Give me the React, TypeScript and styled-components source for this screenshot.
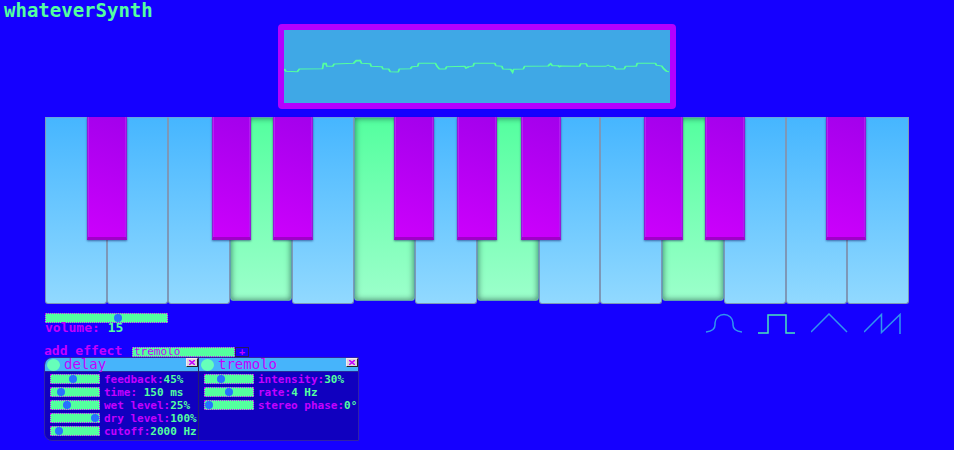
import React from "react";
import styled, { createGlobalStyle, css } from "styled-components";

const GREEN = "#54ff9f";
const PINK = "#c400ff";
const SKY = "#46b4fb";
const BLUE = "#1500ff";
const NAVY = "#1000bf";

const GlobalStyle = createGlobalStyle`
  * { box-sizing: border-box; }
  body {
    margin: 0;
    background: ${BLUE};
    color: ${PINK};
    font-family: "DejaVu Sans Mono", "Liberation Mono", monospace;
    font-weight: 700;
    font-size: 11px;
  }
  button, input, select { font: inherit; margin: 0; padding: 0; }
`;

const Page = styled.main`
  display: flex;
  flex-direction: column;
`;

const Title = styled.h1`
  margin: 0;
  padding: 0 4px;
  font-size: 19px;
  line-height: 20px;
  color: ${GREEN};
`;

const Scope = styled.section`
  align-self: center;
  width: 42%;
  min-width: 240px;
  max-width: 398px;
  margin: 4px 0 8px;
  border: 6px solid #b400ff;
  border-radius: 4px;
  background: #3fa8e6;
  svg { display: block; width: 100%; height: 73px; }
`;

const Board = styled.section`
  position: relative;
  display: flex;
  height: 187px;
  margin: 0 45px;
`;

const WhiteKey = styled.button<{ $on: boolean }>`
  flex: 1;
  border: 1px solid #7d98b8;
  border-top-color: #68a5de;
  border-radius: 0 0 3px 3px;
  background: linear-gradient(#46b6ff, #91d9ff);
  ${(p) =>
    p.$on &&
    css`
      height: 184px;
      border-color: #5f9fae;
      background: linear-gradient(${GREEN}, #9cffcb);
      box-shadow: inset 0 0 6px rgba(0, 40, 40, 0.6);
    `}
`;

const BlackKey = styled.button<{ $left: number }>`
  position: absolute;
  top: 0;
  left: ${(p) => p.$left}%;
  width: 4.6%;
  height: 123px;
  border: solid #9418d8;
  border-width: 0 1px 3px;
  border-bottom-color: #a000c8;
  background: linear-gradient(20deg, #cc00fc, #a300ec);
  box-shadow: inset 1px 0 0 #b820f5, inset -1px 0 0 #b01cf0, 0 1px 2px rgba(0, 0, 80, 0.5);
`;

const Controls = styled.section`
  display: flex;
  justify-content: space-between;
  margin: 9px 53px 0 45px;
`;

const Volume = styled.div`
  display: flex;
  flex-direction: column;
  width: 123px;
`;

const Slider = styled.input`
  appearance: none;
  display: block;
  width: 50px;
  height: 10px;
  border: 1px dotted #c400ff;
  background: ${GREEN};
  &::-webkit-slider-thumb {
    appearance: none;
    width: 8px;
    height: 8px;
    border-radius: 50%;
    background: #2672ff;
  }
`;

const WideSlider = styled(Slider)`
  width: 100%;
`;

const Label = styled.label`
  font-size: 13px;
  line-height: 10px;
  white-space: pre;
`;

const Value = styled.output`
  color: ${GREEN};
`;

const Waves = styled.div`
  display: flex;
  gap: 16px;
`;

const WaveButton = styled.button<{ $on: boolean }>`
  display: block;
  height: 22px;
  border: 0;
  background: none;
  color: ${(p) => (p.$on ? "#4be3bb" : "#3096ee")};
  svg { display: block; }
`;

const Effects = styled.section`
  margin: 12px 45px 0 44px;
`;

const AddForm = styled.form`
  display: flex;
  align-items: flex-start;
  height: 10px;
`;

const AddLabel = styled.label`
  width: 88px;
  font-size: 13px;
  line-height: 8px;
  white-space: nowrap;
`;

const EffectSelect = styled.select`
  appearance: none;
  width: 103px;
  height: 10px;
  padding: 0 1px;
  border: 1px dotted ${PINK};
  border-radius: 0;
  background: ${GREEN};
  color: ${PINK};
  font-size: 11px;
  font-weight: 400;
  line-height: 8px;
`;

const AddButton = styled.button`
  width: 14px;
  height: 10px;
  border: 1px solid #251a60;
  background: ${BLUE};
  color: ${PINK};
  font-size: 10px;
  line-height: 6px;
`;

const Rack = styled.div`
  display: flex;
  width: max-content;
  max-width: 100%;
  border: 1px solid #3023a8;
  border-radius: 8px 0 0 8px;
  background: ${NAVY};
`;

const Panel = styled.article<{ $width: number }>`
  width: ${(p) => p.$width}px;
  & + & { border-left: 1px solid #242070; }
  &:first-child > header { border-top-left-radius: 7px; }
`;

const PanelHead = styled.header`
  display: flex;
  align-items: center;
  height: 14px;
  padding-left: 2px;
  border-bottom: 1px solid #25299c;
  background: ${SKY};
`;

const Power = styled.button`
  width: 13px;
  height: 12px;
  border: 0;
  border-radius: 50%;
  background: #66ffba;
`;

const PanelTitle = styled.h2`
  flex: 1;
  margin: 0;
  padding-left: 4px;
  font-size: 14px;
  font-weight: 400;
  line-height: 13px;
`;

const Close = styled.button`
  display: grid;
  place-items: center;
  align-self: flex-start;
  width: 12px;
  height: 9px;
  border: 1px solid #f3e8f3;
  border-right-color: #222;
  border-bottom-color: #222;
  background: #ddd3dd;
  color: ${PINK};
`;

const Params = styled.div`
  display: grid;
  gap: 3px;
  padding: 2px 0 4px 5px;
`;

const Param = styled.div`
  display: flex;
  align-items: center;
  gap: 4px;
  height: 10px;
`;

const ParamLabel = styled(Label)`
  padding-top: 2px;
  font-size: 11px;
`;

const trace =
  "1,119 6,124 40,125 46,117 115,116 118,101 126,101 128,109 146,109 150,102 208,100 216,92 228,91 232,100 258,101 261,109 293,110 296,117 313,117 318,125 342,126 345,117 378,116 383,110 400,109 403,100 453,100 458,109 465,117 483,117 487,110 541,109 544,114 553,110 566,108 569,100 631,100 634,107 652,109 655,117 678,118 684,127 687,118 716,117 720,109 790,108 798,101 803,107 820,107 824,110 830,108 884,109 888,101 904,101 908,109 963,109 970,105 975,109 988,110 992,117 1018,117 1022,109 1054,109 1057,100 1111,100 1115,106 1130,108 1136,116 1145,124 1152,125";

const accents =
  "M1,117L6,124M115,117L118,101H126L128,109M146,109L150,102M208,100L216,92H228L232,100M293,110L296,117M313,117L318,125M342,126L345,117M378,116L383,110M541,109L544,114L553,110M566,109L569,100M631,100L634,107M652,109L655,117M678,118L684,127L687,118M790,108L798,101L803,107M820,107L824,110L830,108M884,109L888,101M904,101L908,109M988,110L992,117M1018,117L1022,109M1111,100L1115,106M1130,108L1136,116L1145,124M40,125L46,117M258,101L261,109M400,109L403,100M453,100L458,109L465,117M483,117L487,110M716,117L720,109M1054,109L1057,100";

const pressed = [3, 5, 7, 10];
const blackKeys = [4.9, 19.3, 26.4, 40.4, 47.7, 55.1, 69.3, 76.4, 90.4];

const waves = [
  { name: "sine", d: "M1 19Q10 18 10 12V10A9 8.500 0 0 1 28 10V12Q28 18 37 19" },
  { name: "square", d: "M0 20H10V2H28V20H38" },
  { name: "triangle", d: "M0 19L18 1L36 19" },
  { name: "sawtooth", d: "M0 19L17.500 1.500V19.500L36 1.500V21" },
];

const effects = [
  {
    name: "delay",
    width: 153,
    params: [
      { label: "feedback:", value: "45%", pos: 45 },
      { label: "time: ", value: "150 ms", pos: 15 },
      { label: "wet level:", value: "25%", pos: 31 },
      { label: "dry level:", value: "100%", pos: 100 },
      { label: "cutoff:", value: "2000 Hz", pos: 10 },
    ],
  },
  {
    name: "tremolo",
    width: 160,
    params: [
      { label: "intensity:", value: "30%", pos: 30 },
      { label: "rate:", value: "4 Hz", pos: 50 },
      { label: "stereo phase:", value: "0°", pos: 1 },
    ],
  },
];

export default function App() {
  return (
    <>
      <GlobalStyle />
      <Page>
        <Title>whateverSynth</Title>
        <Scope aria-label="oscilloscope">
          <svg viewBox="0 0 1155 219" preserveAspectRatio="none" fill="none" stroke={GREEN}>
            <polyline points={trace} strokeWidth="3" />
            <path d={accents} strokeWidth="5" />
          </svg>
        </Scope>
        <Board aria-label="keyboard">
          {Array.from({ length: 14 }, (_, i) => (
            <WhiteKey key={i} $on={pressed.includes(i)} aria-label={`white key ${i + 1}`} />
          ))}
          {blackKeys.map((left, i) => (
            <BlackKey key={left} $left={left} aria-label={`black key ${i + 1}`} />
          ))}
        </Board>
        <Controls>
          <Volume>
            <WideSlider id="volume" type="range" min="0" max="100" defaultValue="60" />
            <Label htmlFor="volume">
              volume: <Value>15</Value>
            </Label>
          </Volume>
          <Waves>
            {waves.map((w) => (
              <WaveButton key={w.name} $on={w.name === "square"} aria-label={w.name}>
                <svg width="37" height="22" viewBox="0 0 37 22" fill="none" stroke="currentColor" strokeWidth="1.500">
                  <path d={w.d} />
                </svg>
              </WaveButton>
            ))}
          </Waves>
        </Controls>
        <Effects>
          <AddForm onSubmit={(e) => e.preventDefault()}>
            <AddLabel htmlFor="effect">add effect</AddLabel>
            <EffectSelect id="effect" defaultValue="tremolo">
              <option>delay</option>
              <option>tremolo</option>
            </EffectSelect>
            <AddButton type="submit">+</AddButton>
          </AddForm>
          <Rack>
            {effects.map((fx) => (
              <Panel key={fx.name} $width={fx.width}>
                <PanelHead>
                  <Power aria-label={`toggle ${fx.name}`} />
                  <PanelTitle>{fx.name}</PanelTitle>
                  <Close aria-label={`remove ${fx.name}`}>
                    <svg width="6" height="5" viewBox="0 0 6 5" stroke="currentColor" strokeWidth="1.500">
                      <path d="M0 0L6 5M6 0L0 5" />
                    </svg>
                  </Close>
                </PanelHead>
                <Params>
                  {fx.params.map((p) => {
                    const id = `${fx.name}-${p.label.replace(/\W/g, "")}`;
                    return (
                      <Param key={id}>
                        <Slider id={id} type="range" min="0" max="100" defaultValue={p.pos} />
                        <ParamLabel htmlFor={id}>
                          {p.label}
                          <Value>{p.value}</Value>
                        </ParamLabel>
                      </Param>
                    );
                  })}
                </Params>
              </Panel>
            ))}
          </Rack>
        </Effects>
      </Page>
    </>
  );
}
